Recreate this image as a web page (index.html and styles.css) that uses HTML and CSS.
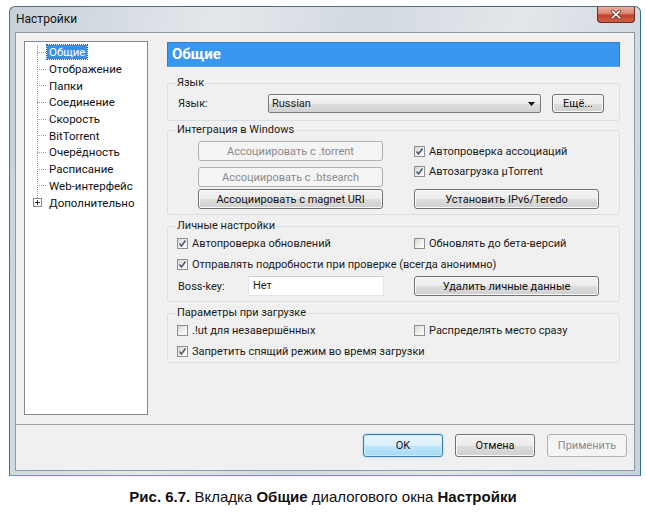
FILE: index.html
```html
<!DOCTYPE html>
<html lang="ru">
<head>
<meta charset="utf-8">
<title>Настройки</title>
<link rel="stylesheet" href="styles.css">
</head>
<body>
<div class="window">
  <div class="titlebar">
    <span class="title">Настройки</span>
    <div class="close"><svg width="38" height="15" viewBox="0 0 38 15"><path d="M15 4 L23 11 M23 4 L15 11" stroke="#5a1a10" stroke-width="3.2" stroke-linecap="round"/><path d="M15 4 L23 11 M23 4 L15 11" stroke="#fff" stroke-width="1.8" stroke-linecap="round"/></svg></div>
  </div>
  <div class="client">
    <div class="main">
      <div class="tree">
        <ul class="tree-list">
          <li class="item"><span class="lbl sel">Общие</span></li>
          <li class="item"><span class="lbl">Отображение</span></li>
          <li class="item"><span class="lbl">Папки</span></li>
          <li class="item"><span class="lbl">Соединение</span></li>
          <li class="item"><span class="lbl">Скорость</span></li>
          <li class="item"><span class="lbl">BitTorrent</span></li>
          <li class="item"><span class="lbl">Очерёдность</span></li>
          <li class="item"><span class="lbl">Расписание</span></li>
          <li class="item"><span class="lbl">Web-интерфейс</span></li>
          <li class="item exp"><svg class="plus" width="9" height="9" viewBox="0 0 9 9"><rect x="0.5" y="0.5" width="8" height="8" fill="#fff" stroke="#8c8c8c"/><path d="M2 4.5 H7 M4.5 2 V7" stroke="#333" stroke-width="1"/></svg><span class="lbl">Дополнительно</span></li>
        </ul>
      </div>
      <div class="panel">
        <div class="header">Общие</div>

        <fieldset class="grp g-lang">
          <legend>Язык</legend>
          <div class="lang-row">
            <span class="lab">Язык:</span>
            <div class="combo"><span>Russian</span><svg width="7" height="4" viewBox="0 0 7 4"><path d="M0 0 H7 L3.5 4 Z" fill="#111"/></svg></div>
            <div class="btn more">Ещё...</div>
          </div>
        </fieldset>

        <fieldset class="grp g-int">
          <legend>Интеграция в Windows</legend>
          <div class="int-cols">
            <div class="col-left">
              <div class="btn dis b1">Ассоциировать с .torrent</div>
              <div class="btn dis b2">Ассоциировать с .btsearch</div>
              <div class="btn b3">Ассоциировать с magnet URI</div>
            </div>
            <div class="col-right">
              <label class="chk"><span class="cb on"><svg width="9" height="9" viewBox="0 0 9 9"><path d="M1.5 4.5 L3.5 7 L7.5 1.5" fill="none" stroke="#4a5a72" stroke-width="1.6"/></svg></span>Автопроверка ассоциаций</label>
              <label class="chk"><span class="cb on"><svg width="9" height="9" viewBox="0 0 9 9"><path d="M1.5 4.5 L3.5 7 L7.5 1.5" fill="none" stroke="#4a5a72" stroke-width="1.6"/></svg></span>Автозагрузка µTorrent</label>
              <div class="btn b4">Установить IPv6/Teredo</div>
            </div>
          </div>
        </fieldset>

        <fieldset class="grp g-pers">
          <legend>Личные настройки</legend>
          <div class="pers-grid">
            <label class="chk"><span class="cb on"><svg width="9" height="9" viewBox="0 0 9 9"><path d="M1.5 4.5 L3.5 7 L7.5 1.5" fill="none" stroke="#4a5a72" stroke-width="1.6"/></svg></span>Автопроверка обновлений</label>
            <label class="chk"><span class="cb"></span>Обновлять до бета-версий</label>
            <label class="chk span2"><span class="cb on"><svg width="9" height="9" viewBox="0 0 9 9"><path d="M1.5 4.5 L3.5 7 L7.5 1.5" fill="none" stroke="#4a5a72" stroke-width="1.6"/></svg></span>Отправлять подробности при проверке (всегда анонимно)</label>
            <div class="boss">
              <span class="boss-lab">Boss-key:</span>
              <div class="input">Нет</div>
            </div>
            <div class="btn b5">Удалить личные данные</div>
          </div>
        </fieldset>

        <fieldset class="grp g-load">
          <legend>Параметры при загрузке</legend>
          <div class="pers-grid load-grid">
            <label class="chk"><span class="cb"></span>.!ut для незавершённых</label>
            <label class="chk"><span class="cb"></span>Распределять место сразу</label>
            <label class="chk span2"><span class="cb on"><svg width="9" height="9" viewBox="0 0 9 9"><path d="M1.5 4.5 L3.5 7 L7.5 1.5" fill="none" stroke="#4a5a72" stroke-width="1.6"/></svg></span>Запретить спящий режим во время загрузки</label>
          </div>
        </fieldset>
      </div>
    </div>
    <div class="footer">
      <div class="btn fbtn default">OK</div>
      <div class="btn fbtn">Отмена</div>
      <div class="btn fbtn dis">Применить</div>
    </div>
  </div>
</div>
<p class="caption"><b>Рис. 6.7.</b> Вкладка <b>Общие</b> диалогового окна <b>Настройки</b></p>
</body>
</html>
```

FILE: styles.css
```css
* { box-sizing: border-box; }

body {
  margin: 0;
  background: #fff;
  font-family: Roboto, "Open Sans", sans-serif;
  font-size: 11px;
  color: #1b1b1b;
}

.window {
  margin: 6px 0 0 9px;
  width: 632px;
  height: 470px;
  border: 1px solid #5d6a75;
  border-right-color: #2f6f86;
  border-bottom-color: #47a9cc;
  border-radius: 6px 6px 0 0;
  background: linear-gradient(100deg, #c8d0d7 0%, #e3e8ec 30%, #d2d9df 50%, #e2e7eb 72%, #c9d2da 100%);
  display: flex;
  flex-direction: column;
  padding: 0 5px 4px 5px;
}

.titlebar {
  height: 25px;
  display: flex;
  justify-content: space-between;
  align-items: flex-start;
}

.title {
  font-size: 12px;
  color: #111;
  padding-left: 1px;
  line-height: 25px;
}

.close {
  width: 38px;
  height: 16px;
  border: 1px solid #6b2a1f;
  border-top: none;
  border-radius: 0 0 4px 4px;
  background: linear-gradient(#eab0a2 0%, #d9826f 45%, #c1422b 52%, #cf5f45 100%);
  display: flex;
}

.client {
  flex: 1;
  border: 1px solid #8e9aa5;
  background: #f0f0f0;
  display: flex;
  flex-direction: column;
}

.main {
  flex: 1;
  display: flex;
  align-items: flex-start;
}

/* tree */
.tree {
  margin: 8px 0 0 8px;
  width: 124px;
  height: 374px;
  background: #fff;
  border: 1px solid #828790;
}

.tree-list {
  list-style: none;
  margin: 2px 0 0 0;
  padding: 0 0 0 12px;
  position: relative;
}

.tree-list::before {
  content: "";
  position: absolute;
  left: 12px;
  top: 1px;
  height: 155px;
  border-left: 1px dotted #9a9a9a;
}

.item {
  height: 16.7px;
  display: flex;
  align-items: center;
  font-size: 11.5px;
  color: #111;
  white-space: nowrap;
}

.item::before {
  content: "";
  width: 9px;
  border-top: 1px dotted #9a9a9a;
  flex: none;
}

.item.exp::before { display: none; }

.plus {
  margin-left: -4px;
  margin-right: 4px;
  position: relative;
  flex: none;
}

.lbl {
  padding: 0 2px;
  line-height: 14px;
  margin-left: 1px;
}

.lbl.sel {
  background: #3c8ee0;
  color: #fff;
  outline: 1px dotted #1f5fa8;
}

/* right panel */
.panel {
  margin: 9px 0 0 19px;
  width: 453px;
}

.header {
  height: 25px;
  background: #3a97f1;
  border: 1px solid #2f7fcf;
  border-bottom-color: #5aa8f4;
  color: #fff;
  font-weight: 700;
  font-size: 15px;
  line-height: 23px;
  padding-left: 4px;
}

.grp {
  margin: 0;
  padding: 0;
  border: 1px solid #d8dfe4;
  border-radius: 3px;
  min-width: 0;
}

.grp legend {
  margin-left: 8px;
  padding: 0 1px;
  line-height: 14px;
  font-size: 11px;
  color: #1b1b1b;
}

.g-lang { margin-top: 9px; }
.g-int { margin-top: 2px; }
.g-pers { margin-top: 4px; }
.g-load { margin-top: 4px; }

.lang-row {
  display: flex;
  align-items: center;
  padding: 4px 0 7px 10px;
}

.lab { width: 90px; }

.combo {
  width: 273px;
  height: 19px;
  border: 1px solid #7a7a7a;
  border-radius: 2px;
  background: linear-gradient(#f6f6f6 0%, #ececec 50%, #dedede 51%, #d2d2d2 100%);
  display: flex;
  align-items: center;
  justify-content: space-between;
  padding: 0 5px 0 3px;
}

.btn {
  height: 20px;
  border: 1px solid #707070;
  border-radius: 3px;
  background: linear-gradient(#f3f3f3 0%, #ebebeb 50%, #dddddd 51%, #cfcfcf 100%);
  box-shadow: inset 0 0 0 1px #fbfbfb;
  display: flex;
  align-items: center;
  justify-content: center;
  color: #111;
  white-space: nowrap;
}

.btn.dis {
  border-color: #adb2b5;
  background: #f4f4f4;
  box-shadow: none;
  color: #8a8a8a;
}

.more {
  width: 52px;
  height: 19px;
  margin-left: 11px;
}

.int-cols {
  display: flex;
  gap: 31px;
  padding: 4px 0 5px 30px;
}

.col-left, .col-right {
  width: 185px;
  display: flex;
  flex-direction: column;
}

.b2 { margin-top: 6px; }
.b3 { margin-top: 2px; }
.b4 { margin-top: 8px; }

.chk {
  height: 20px;
  display: flex;
  align-items: center;
  gap: 4px;
  white-space: nowrap;
}

.cb {
  width: 11px;
  height: 11px;
  border: 1px solid #8f8f8f;
  background: linear-gradient(135deg, #d6d6d6 0%, #f3f3f3 60%, #fff 100%);
  display: flex;
  align-items: center;
  justify-content: center;
  flex: none;
}

.pers-grid {
  display: grid;
  grid-template-columns: 237px 185px;
  grid-auto-rows: 21px;
  padding: 0 0 5px 9px;
}

.span2 { grid-column: 1 / 3; }

.pers-grid .chk { height: 21px; }

.boss {
  display: flex;
  align-items: center;
  margin-top: 1px;
  height: 20px;
}

.boss-lab {
  width: 71px;
  padding-left: 1px;
}

.input {
  width: 136px;
  height: 20px;
  background: #fff;
  border: 1px solid #e2e6ea;
  border-top-color: #c9ced3;
  padding-left: 4px;
  line-height: 18px;
}

.b5 { margin-top: 1px; }

.load-grid { padding-bottom: 0; }

/* footer */
.footer {
  height: 46px;
  border-top: 1px solid #a0a0a0;
  display: flex;
  justify-content: flex-end;
  align-items: flex-start;
  gap: 12px;
  padding: 9px 7px 0 0;
}

.fbtn {
  width: 80px;
  height: 23px;
}

.default {
  border-color: #3c7fb1;
  background: linear-gradient(#eaf6fd 0%, #d9f0fc 50%, #bee6fd 51%, #a7d9f5 100%);
  box-shadow: inset 0 0 0 1px #c6ecfc, 0 0 2px #7fc3ea;
}

.caption {
  margin: 12px 0 0 0;
  text-align: center;
  font-family: "Liberation Sans", Arial, sans-serif;
  font-size: 15px;
  color: #111;
}
```
